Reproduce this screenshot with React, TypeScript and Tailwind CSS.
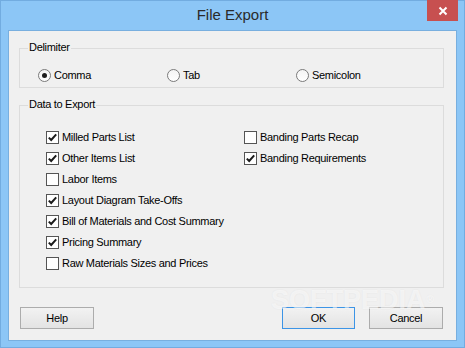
import React from "react";

const Radio = ({ label, checked }: { label: string; checked?: boolean }) => (
  <div className="flex items-center gap-[3px] w-[129px]">
    <div className="w-[13px] h-[13px] rounded-full border border-[#7a7a7a] bg-gradient-to-b from-[#f4f4f4] to-white flex items-center justify-center">
      {checked && <div className="w-[5px] h-[5px] rounded-full bg-[#1e1e1e]" />}
    </div>
    <span>{label}</span>
  </div>
);

const Check = ({ label, checked }: { label: string; checked?: boolean }) => (
  <div className="flex items-center gap-[3px] h-[21px]">
    <div className="w-[13px] h-[13px] border border-[#555] bg-white flex items-center justify-center">
      {checked && (
        <svg width="11" height="11" viewBox="0 0 11 11">
          <path d="M1.8 5.6 L4.2 8 L9.2 2.4" fill="none" stroke="#1a1a1a" strokeWidth="2" />
        </svg>
      )}
    </div>
    <span>{label}</span>
  </div>
);

const Button = ({ label, primary, w }: { label: string; primary?: boolean; w: string }) => (
  <div
    className={`${w} h-[22px] flex items-center justify-center border bg-gradient-to-b from-[#f2f2f2] to-[#e3e3e3] ${
      primary ? "border-[#3c94e6]" : "border-[#acacac]"
    }`}
  >
    {label}
  </div>
);

export default function App() {
  return (
    <div className="w-[465px] h-[348px] bg-[#8cc6f6] border border-[#72ace0] flex flex-col text-[11px] tracking-[-0.3px] text-black font-['Liberation_Sans',Arial,sans-serif]">
      {/* title bar */}
      <div className="relative h-[29px] flex items-center justify-center">
        <span className="text-[15px] tracking-normal text-[#2a2a2a] pb-[1px]">File Export</span>
        <div className="absolute right-[6px] -top-px w-[31px] h-[21px] bg-[#c75050] flex items-center justify-center">
          <svg width="10" height="10" viewBox="0 0 10 10">
            <path d="M1.5 1.5 L8.5 8.5 M8.5 1.5 L1.5 8.5" stroke="white" strokeWidth="2" />
          </svg>
        </div>
      </div>

      {/* client */}
      <div className="relative overflow-hidden mx-[7px] h-[311px] border border-[#78afdf] bg-[#f0f0f0] pl-[10px] pt-[17px]">
        <div className="relative w-[425px] h-[40px] border border-[#dcdcdc]">
          <span className="absolute left-[8px] -top-[8px] px-[1px] bg-[#f0f0f0] leading-[13px]">Delimiter</span>
          <div className="flex mt-[18px] pl-[18px]">
            <Radio label="Comma" checked />
            <Radio label="Tab" />
            <Radio label="Semicolon" />
          </div>
        </div>

        <div className="relative w-[425px] h-[183px] mt-[17px] border border-[#dcdcdc]">
          <span className="absolute left-[8px] -top-[8px] px-[1px] bg-[#f0f0f0] leading-[13px]">Data to Export</span>
          <div className="flex pt-[21px] pl-[26px]">
            <div className="w-[198px] flex flex-col">
              <Check label="Milled Parts List" checked />
              <Check label="Other Items List" checked />
              <Check label="Labor Items" />
              <Check label="Layout Diagram Take-Offs" checked />
              <Check label="Bill of Materials and Cost Summary" checked />
              <Check label="Pricing Summary" checked />
              <Check label="Raw Materials Sizes and Prices" />
            </div>
            <div className="flex flex-col">
              <Check label="Banding Parts Recap" />
              <Check label="Banding Requirements" checked />
            </div>
          </div>
        </div>

        <div className="flex w-[425px] mt-[19px] px-[1px]">
          <Button label="Help" w="w-[74px]" />
          <div className="ml-auto flex gap-[14px]">
            <Button label="OK" primary w="w-[73px]" />
            <Button label="Cancel" w="w-[74px]" />
          </div>
        </div>

        <div className="absolute left-[262px] top-[254px] leading-[30px] text-[27px] font-bold tracking-normal text-white/55 [text-shadow:0_0_2px_rgba(0,0,0,0.06)] pointer-events-none select-none">
          SOFTPEDIA<span className="text-[10px] align-top ml-[1px]">®</span>
        </div>
      </div>
    </div>
  );
}
